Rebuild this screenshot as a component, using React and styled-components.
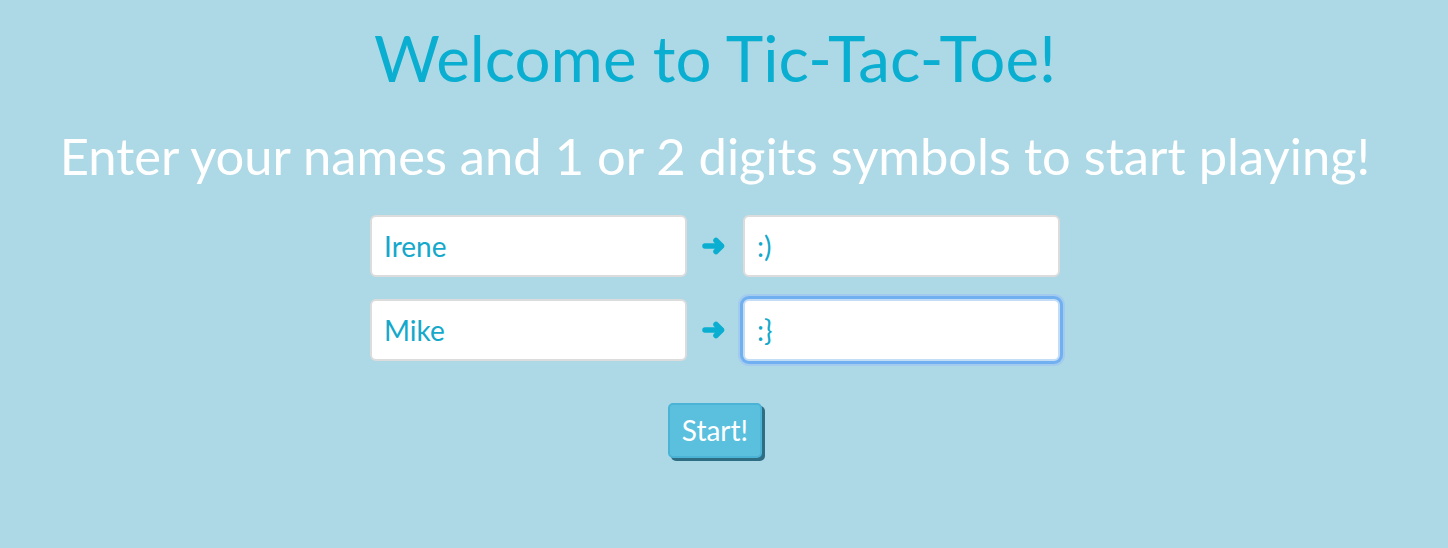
import React from "react";
import styled, { createGlobalStyle } from "styled-components";

const Global = createGlobalStyle`
  html, body { margin: 0; padding: 0; background: #add8e5; }
  body { font-family: Lato, "Noto Sans", sans-serif; }
`;

const Page = styled.div`
  min-height: 548px;
  display: flex;
  flex-direction: column;
  align-items: center;
  padding: 20px 18px 0 0;
  box-sizing: border-box;
`;

const Title = styled.h1`
  margin: 0;
  font-weight: 400;
  font-size: 63.6px;
  line-height: 76px;
  color: #0aaed0;
`;

const Subtitle = styled.h2`
  margin: 29px 0 0;
  font-weight: 400;
  font-size: 50.7px;
  line-height: 62px;
  color: #ffffff;
`;

const Form = styled.form`
  margin-top: 28px;
  display: flex;
  flex-direction: column;
  align-items: center;
  gap: 22px;
`;

const Row = styled.div`
  display: flex;
  align-items: center;
`;

const Input = styled.input`
  width: 317px;
  height: 62px;
  box-sizing: border-box;
  border: 2px solid ${(p) => (p.$focused ? "#c4ddf6" : "#dcdcdc")};
  border-radius: 6px;
  background: #fff;
  padding: 0 12px;
  font-family: inherit;
  font-size: 28px;
  color: #14a8cb;
  outline: none;
  box-shadow: ${(p) => (p.$focused ? "0 0 0 3px #70b0f1, 0 0 0 5px #a2cbef" : "none")};
`;

const Arrow = styled.span`
  width: 56px;
  display: flex;
  justify-content: center;
  align-items: center;
  padding-right: 3px;
  box-sizing: border-box;
`;

const StartButton = styled.button`
  margin-top: 20px;
  width: 94px;
  height: 55px;
  box-sizing: border-box;
  border: 2px solid #4bb4d6;
  border-radius: 5px;
  background: #5bc0de;
  color: #fff;
  font-family: inherit;
  font-size: 28px;
  padding: 0 0 2px;
  box-shadow: 3px 3px 0 #2d6e84;
`;

const ArrowIcon = () => (
  <svg width="24" height="18" viewBox="0 0 24 18" fill="none" stroke="#0aaed0" strokeWidth="5.5" strokeLinecap="round" strokeLinejoin="round">
    <path d="M3 9H19" />
    <path d="M14 3.5L19.5 9L14 14.5" />
  </svg>
);

export default function App() {
  return (
    <>
      <Global />
      <Page>
        <Title>Welcome to Tic-Tac-Toe!</Title>
        <Subtitle>Enter your names and 1 or 2 digits symbols to start playing!</Subtitle>
        <Form onSubmit={(e) => e.preventDefault()}>
          <Row>
            <Input defaultValue="Irene" />
            <Arrow><ArrowIcon /></Arrow>
            <Input defaultValue=":)" />
          </Row>
          <Row>
            <Input defaultValue="Mike" />
            <Arrow><ArrowIcon /></Arrow>
            <Input defaultValue=":}" $focused />
          </Row>
          <StartButton type="button">Start!</StartButton>
        </Form>
      </Page>
    </>
  );
}
